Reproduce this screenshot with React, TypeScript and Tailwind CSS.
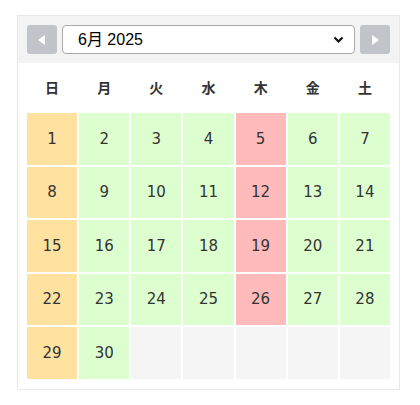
import React from "react";

type Day = { n: number | null; kind: "sun" | "open" | "closed" | "empty" };

const weekdays = ["日", "月", "火", "水", "木", "金", "土"];

// June 2025 starts on a Sunday
const buildDays = (): Day[] => {
  const days: Day[] = [];
  for (let n = 1; n <= 30; n++) {
    const dow = (n - 1) % 7;
    let kind: Day["kind"] = "open";
    if (dow === 0) kind = "sun";
    else if (dow === 4) kind = "closed";
    days.push({ n, kind });
  }
  while (days.length < 35) days.push({ n: null, kind: "empty" });
  return days;
};

const cellColor: Record<Day["kind"], string> = {
  sun: "bg-[#ffe1a0]",
  open: "bg-[#ddffd0]",
  closed: "bg-[#ffbbbb]",
  empty: "bg-[#f5f5f5]",
};

const Arrow = ({ dir }: { dir: "left" | "right" }) => (
  <button className="flex h-[29px] w-[30px] shrink-0 items-center justify-center rounded-[3px] bg-[#c1c5ca]">
    <svg width="8" height="10" viewBox="0 0 8 10">
      {dir === "left" ? (
        <polygon points="7,0 7,10 0,5" fill="#ffffff" />
      ) : (
        <polygon points="1,0 1,10 8,5" fill="#ffffff" />
      )}
    </svg>
  </button>
);

const App = () => {
  const days = buildDays();

  return (
    <div className="min-h-[405px] w-[420px] bg-white pl-[17px] pt-[15px] font-['DejaVu_Sans','Noto_Sans_CJK_JP',sans-serif]">
      <div className="w-[383px] border border-[#e8e8e8] bg-white">
        {/* Month navigation */}
        <div className="flex h-[47px] items-center gap-[5px] bg-[#f3f3f3] px-[9px]">
          <Arrow dir="left" />
          <div className="flex h-[29px] flex-1 items-center justify-between rounded-[4px] border border-[#a9a9a9] bg-white pl-[15px] pr-[10px] font-['Liberation_Sans','Noto_Sans_CJK_JP',sans-serif] text-[16px] text-black">
            <span>6月 2025</span>
            <svg width="11" height="8" viewBox="0 0 11 8">
              <polyline
                points="1.5,1.5 5.5,5.5 9.5,1.5"
                fill="none"
                stroke="#111"
                strokeWidth="2.2"
              />
            </svg>
          </div>
          <Arrow dir="right" />
        </div>

        {/* Calendar grid */}
        <div className="px-[9px] pb-[10px]">
          <div className="grid grid-cols-7 gap-x-[2px]">
            {weekdays.map((w) => (
              <div
                key={w}
                className="flex h-[48px] items-center justify-center font-['Noto_Sans_CJK_JP',sans-serif] text-[14px] font-bold text-[#333]"
              >
                {w}
              </div>
            ))}
          </div>
          <div className="mt-[2px] grid grid-cols-7 gap-[2px]">
            {days.map((d, i) => (
              <div
                key={i}
                className={`flex h-[51.5px] items-center justify-center text-[15px] text-[#333] ${cellColor[d.kind]}`}
              >
                {d.n}
              </div>
            ))}
          </div>
        </div>
      </div>
    </div>
  );
};

export default App;
